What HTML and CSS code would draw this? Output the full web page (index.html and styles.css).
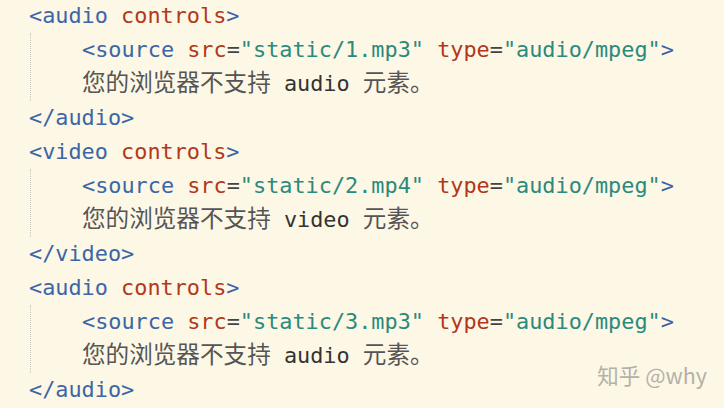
FILE: index.html
```html
<!DOCTYPE html>
<html lang="zh">
<head>
<meta charset="utf-8">
<link rel="stylesheet" href="styles.css">
</head>
<body>
<div class="code">
  <div class="line"><span class="tag">&lt;audio</span> <span class="attr">controls</span><span class="tag">&gt;</span></div>
  <div class="block">
    <div class="line"><span class="tag">&lt;source</span> <span class="attr">src</span><span class="eq">=</span><span class="str">"static/1.mp3"</span> <span class="attr">type</span><span class="eq">=</span><span class="str">"audio/mpeg"</span><span class="tag">&gt;</span></div>
    <div class="line"><span class="cjk">您的浏览器不支持</span> audio <span class="cjk">元素。</span></div>
  </div>
  <div class="line"><span class="tag">&lt;/audio&gt;</span></div>
  <div class="line"><span class="tag">&lt;video</span> <span class="attr">controls</span><span class="tag">&gt;</span></div>
  <div class="block">
    <div class="line"><span class="tag">&lt;source</span> <span class="attr">src</span><span class="eq">=</span><span class="str">"static/2.mp4"</span> <span class="attr">type</span><span class="eq">=</span><span class="str">"audio/mpeg"</span><span class="tag">&gt;</span></div>
    <div class="line"><span class="cjk">您的浏览器不支持</span> video <span class="cjk">元素。</span></div>
  </div>
  <div class="line"><span class="tag">&lt;/video&gt;</span></div>
  <div class="line"><span class="tag">&lt;audio</span> <span class="attr">controls</span><span class="tag">&gt;</span></div>
  <div class="block">
    <div class="line"><span class="tag">&lt;source</span> <span class="attr">src</span><span class="eq">=</span><span class="str">"static/3.mp3"</span> <span class="attr">type</span><span class="eq">=</span><span class="str">"audio/mpeg"</span><span class="tag">&gt;</span></div>
    <div class="line"><span class="cjk">您的浏览器不支持</span> audio <span class="cjk">元素。</span></div>
  </div>
  <div class="line"><span class="tag">&lt;/audio&gt;</span></div>
</div>
<div class="watermark">知乎 @why</div>
</body>
</html>
```
FILE: styles.css
```css
html, body {
  margin: 0;
  padding: 0;
  background: #fdf7e6;
  width: 724px;
  height: 408px;
  overflow: hidden;
}
body {
  position: relative;
}
.code {
  padding: 0 0 0 29px;
  margin-top: -1px;
  font-family: "DejaVu Sans Mono", "Liberation Mono", monospace;
  font-size: 21.85px;
  line-height: 34px;
  color: #333333;
}
.line {
  height: 34px;
  white-space: pre;
}
.block {
  margin-left: 1px;
  border-left: 1px dotted #c9c6bc;
  padding-left: 51px;
}
.tag { color: #3a66a6; }
.attr { color: #b2381a; }
.eq { color: #444444; }
.str { color: #2a8a7c; }
.cjk {
  font-family: "Noto Sans CJK SC", sans-serif;
  font-size: 23.6px;
  line-height: 1;
  color: #555555;
}
.watermark {
  position: absolute;
  right: 17px;
  bottom: 20px;
  font-family: "Noto Sans CJK SC", "Noto Sans", sans-serif;
  font-size: 21.5px;
  line-height: 26px;
  color: #b4b1a9;
}
```
